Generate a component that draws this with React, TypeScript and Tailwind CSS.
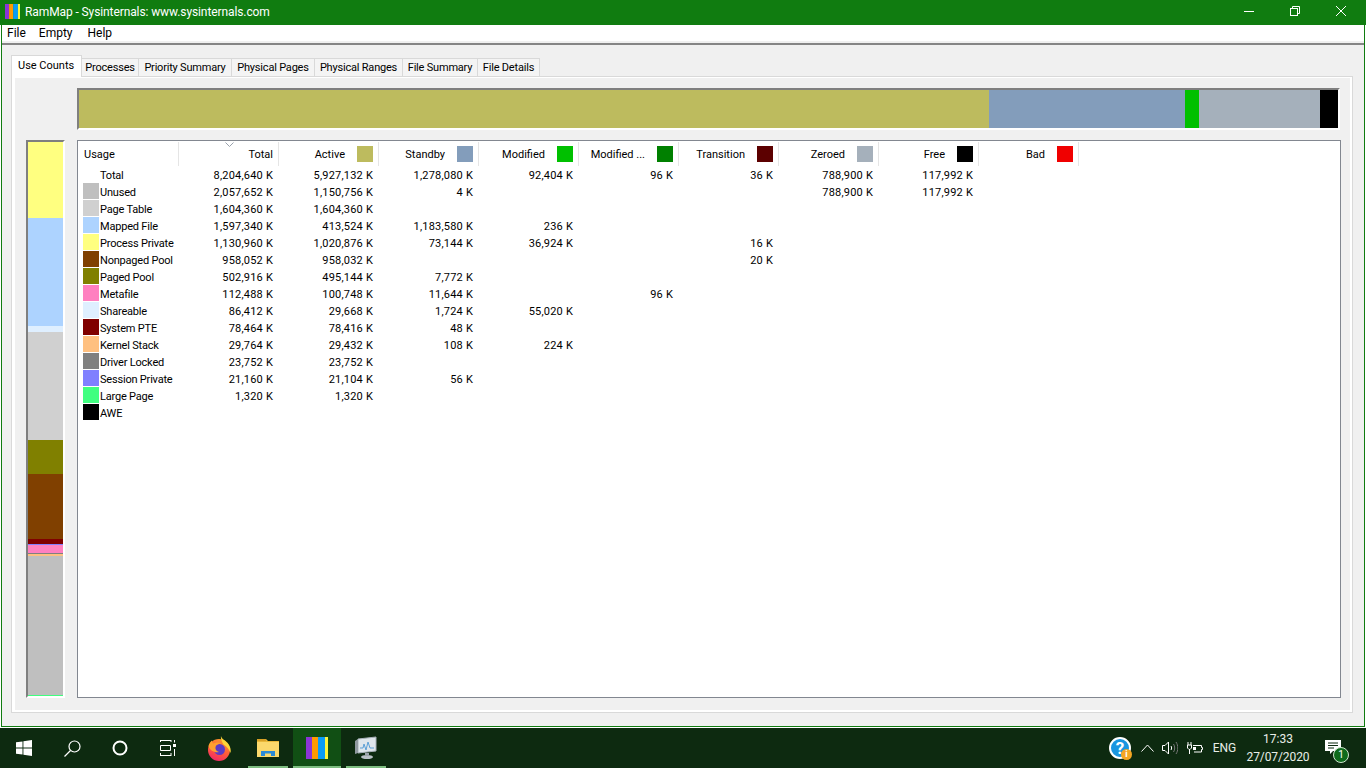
const sans = "font-['Roboto','Noto_Sans',sans-serif]";

const tabs = [
  { label: "Processes", w: "w-[57px]" },
  { label: "Priority Summary", w: "w-[93px]" },
  { label: "Physical Pages", w: "w-[83px]" },
  { label: "Physical Ranges", w: "w-[88px]" },
  { label: "File Summary", w: "w-[75px]" },
  { label: "File Details", w: "w-[62px]" },
];

const columns = [
  { label: "Active", color: "bg-[#bdbb5e]" },
  { label: "Standby", color: "bg-[#839dbb]" },
  { label: "Modified", color: "bg-[#00c000]" },
  { label: "Modified ...", color: "bg-[#008000]" },
  { label: "Transition", color: "bg-[#5c0000]" },
  { label: "Zeroed", color: "bg-[#a5b0bb]" },
  { label: "Free", color: "bg-black" },
  { label: "Bad", color: "bg-[#f00000]" },
];

const rows = [
  { name: "Total", color: "", v: ["8,204,640 K", "5,927,132 K", "1,278,080 K", "92,404 K", "96 K", "36 K", "788,900 K", "117,992 K"] },
  { name: "Unused", color: "bg-[#bfbfbf]", v: ["2,057,652 K", "1,150,756 K", "4 K", "", "", "", "788,900 K", "117,992 K"] },
  { name: "Page Table", color: "bg-[#d0d0d0]", v: ["1,604,360 K", "1,604,360 K"] },
  { name: "Mapped File", color: "bg-[#add3ff]", v: ["1,597,340 K", "413,524 K", "1,183,580 K", "236 K"] },
  { name: "Process Private", color: "bg-[#ffff80]", v: ["1,130,960 K", "1,020,876 K", "73,144 K", "36,924 K", "", "16 K"] },
  { name: "Nonpaged Pool", color: "bg-[#804000]", v: ["958,052 K", "958,032 K", "", "", "", "20 K"] },
  { name: "Paged Pool", color: "bg-[#808000]", v: ["502,916 K", "495,144 K", "7,772 K"] },
  { name: "Metafile", color: "bg-[#ff80c0]", v: ["112,488 K", "100,748 K", "11,644 K", "", "96 K"] },
  { name: "Shareable", color: "bg-[#dfefff]", v: ["86,412 K", "29,668 K", "1,724 K", "55,020 K"] },
  { name: "System PTE", color: "bg-[#800000]", v: ["78,464 K", "78,416 K", "48 K"] },
  { name: "Kernel Stack", color: "bg-[#ffc080]", v: ["29,764 K", "29,432 K", "108 K", "224 K"] },
  { name: "Driver Locked", color: "bg-[#808080]", v: ["23,752 K", "23,752 K"] },
  { name: "Session Private", color: "bg-[#8080ff]", v: ["21,160 K", "21,104 K", "56 K"] },
  { name: "Large Page", color: "bg-[#40ff80]", v: ["1,320 K", "1,320 K"] },
  { name: "AWE", color: "bg-black", v: [] as string[] },
];

const barSegments = [
  { w: "w-[910px]", color: "bg-[#bdbb5e]" },
  { w: "w-[196px]", color: "bg-[#839dbb]" },
  { w: "w-[14px]", color: "bg-[#00c000]" },
  { w: "w-[121px]", color: "bg-[#a5b0bb]" },
  { w: "w-[18px]", color: "bg-black" },
];

const stackSegments = [
  { h: "h-[76px]", color: "bg-[#ffff80]" },
  { h: "h-[108px]", color: "bg-[#add3ff]" },
  { h: "h-[6px]", color: "bg-[#dfefff]" },
  { h: "h-[108px]", color: "bg-[#d0d0d0]" },
  { h: "h-[34px]", color: "bg-[#808000]" },
  { h: "h-[65px]", color: "bg-[#804000]" },
  { h: "h-[5px]", color: "bg-[#800000]" },
  { h: "h-px", color: "bg-[#8080ff]" },
  { h: "h-[8px]", color: "bg-[#ff80c0]" },
  { h: "h-px", color: "bg-[#808080]" },
  { h: "h-[2px]", color: "bg-[#ffc080]" },
  { h: "h-[139px]", color: "bg-[#bfbfbf]" },
  { h: "h-px", color: "bg-[#40ff80]" },
];

function RamMapIcon({ size }: { size: number }) {
  return (
    <svg width={size} height={size} viewBox="0 0 22 22">
      <rect x="0" y="0" width="6" height="22" fill="#8a35d6" />
      <rect x="6" y="0" width="6" height="22" fill="#ff9a00" />
      <rect x="12" y="0" width="7" height="22" fill="#0a9cf5" />
      <rect x="19" y="0" width="3" height="22" fill="#fdf53a" />
    </svg>
  );
}

function Firefox() {
  return (
    <svg width="24" height="25" viewBox="0 0 24 25">
      <defs>
        <linearGradient id="ff" x1="0.7" y1="0" x2="0.3" y2="1">
          <stop offset="0" stopColor="#ff9a2a" />
          <stop offset="0.55" stopColor="#ff5a3a" />
          <stop offset="1" stopColor="#f0266a" />
        </linearGradient>
      </defs>
      <circle cx="12" cy="14" r="11" fill="url(#ff)" />
      <path d="M14 0c.5 3 4.500 4.500 7 7.500 2.200 2.700 3.200 6 2.500 9.500-1.200-3.500-3.500-6.500-7-8.500-1.500-3-3-5.500-2.500-8.500z" fill="#ffd53a" />
      <circle cx="12.500" cy="13.500" r="5.500" fill="#5d3bc4" />
      <path d="M1.500 10C2 7.500 3.500 5.500 5 4.500c0 1.500.5 2.500 1.500 3C9 6 12 6 14.500 7.500c-3 0-5.500 1.500-6 3.500-.5 2.500 1 4.500 3.500 5-4 1-9-1-10.500-6z" fill="#ffa02e" />
    </svg>
  );
}

function Explorer() {
  return (
    <svg width="22" height="20" viewBox="0 0 22 20">
      <path d="M0 1h9l2 2H22v15H0z" fill="#e9b93a" />
      <rect x="0" y="4" width="22" height="15" fill="#fbd96c" />
      <path d="M4 18v-5h14v5h-4v-2.500H8V18z" fill="#2c8bd6" />
      <rect x="0" y="1" width="9" height="2" fill="#d9a126" />
    </svg>
  );
}

function TaskManager() {
  return (
    <svg width="24" height="24" viewBox="0 0 24 24">
      <path d="M4 3l18-2v14L4 17z" fill="#dfe6ec" stroke="#a7b0b8" />
      <path d="M1 5l3-2v14l-3 1z" fill="#8f989f" />
      <path d="M6 12h3l1-4 2 6 2-8 2 6h4" fill="none" stroke="#5b9fd6" strokeWidth="1" />
      <ellipse cx="13" cy="21" rx="6" ry="2" fill="#b9c0c6" />
      <rect x="11" y="17" width="4" height="3" fill="#9aa3aa" />
    </svg>
  );
}

function TaskButton({ children, active }: { children: React.ReactNode; active?: boolean }) {
  return (
    <div className={`relative w-[48px] h-[40px] flex items-center justify-center ${active ? "bg-[#114f14]" : ""}`}>
      {children}
      <span className={`absolute bottom-0 h-[2px] bg-[#7dbd80] ${active ? "left-0 right-0" : "left-[4px] right-[4px]"}`} />
    </div>
  );
}

export default function App() {
  return (
    <div className={`w-[1366px] h-[768px] overflow-hidden flex flex-col bg-white text-[11px] leading-[17px] text-black ${sans}`}>
      {/* title bar */}
      <div className="h-[25px] bg-[#107c10] flex items-center text-white">
        <div className="ml-[5px] mb-[3px] flex">
          <RamMapIcon size={15} />
        </div>
        <span className="ml-[5px] mb-[1px] text-[12px] tracking-[-0.1px]">RamMap - Sysinternals: www.sysinternals.com</span>
        <div className="ml-auto mr-[2px] mb-[3px] flex">
          <div className="w-[46px] flex justify-center">
            <svg width="10" height="10" viewBox="0 0 10 10"><path d="M0 5.500h10" stroke="#fff" /></svg>
          </div>
          <div className="w-[46px] flex justify-center">
            <svg width="10" height="10" viewBox="0 0 10 10" fill="none" stroke="#fff"><rect x="0.500" y="2.500" width="7" height="7" /><path d="M2.500 2.500v-2h7v7h-2" /></svg>
          </div>
          <div className="w-[46px] flex justify-center">
            <svg width="10" height="10" viewBox="0 0 10 10"><path d="M0 0l10 10M10 0L0 10" stroke="#fff" /></svg>
          </div>
        </div>
      </div>

      {/* window body */}
      <div className="flex-1 flex flex-col pl-px pr-px pb-px">
        <div className="flex-1 flex flex-col border-x border-b border-[#107c10] bg-[#f0f0f0]">
          <div className="h-[16px] bg-white flex items-center text-[12px]">
            <span className="ml-[5px]">File</span>
            <span className="ml-[13px]">Empty</span>
            <span className="ml-[15px]">Help</span>
          </div>
          <div className="h-[2px]" />
          <div className="h-[2px] bg-[#858585]" />

          {/* tab strip */}
          <div className="relative z-10 ml-[9px] mt-[10px] h-[22px] -mb-px flex items-end">
            <div className="h-[22px] w-[71px] pb-[3px] bg-white border border-b-0 border-[#d9d9d9] flex items-center pl-[6px]">Use Counts</div>
            {tabs.map((t) => (
              <div key={t.label} className={`${t.w} h-[18px] mb-px border-t border-r border-[#d9d9d9] bg-[#f4f4f4] flex items-center justify-center whitespace-nowrap tracking-[-0.2px]`}>
                {t.label}
              </div>
            ))}
          </div>

          {/* tab panel */}
          <div className="ml-[9px] w-[1342px] h-[637px] border border-[#d9d9d9]">
            <div className="h-full border-l-[3px] border-r-2 border-t border-b-2 border-white pl-[11px] pt-[10px]">
              <div className="ml-[51px] w-[1263px] h-[42px] flex border-t-2 border-l-2 border-t-[#7f7f7f] border-l-[#7f7f7f] border-b-2 border-r-2 border-b-white border-r-white">
                {barSegments.map((s) => (
                  <div key={s.color} className={`${s.w} h-full ${s.color}`} />
                ))}
              </div>

              <div className="mt-[10px] flex gap-[12px]">
                <div className="w-[39px] h-[558px] flex flex-col border-t-2 border-l-2 border-t-[#7f7f7f] border-l-[#7f7f7f] border-b-2 border-r-2 border-b-white border-r-white">
                  {stackSegments.map((s, i) => (
                    <div key={i} className={`${s.h} ${s.color}`} />
                  ))}
                </div>

                {/* use counts list */}
                <div className="w-[1264px] h-[558px] border border-[#828790] bg-white">
                  <div className="h-[25px] pt-px flex">
                    <div className="w-[101px] h-[24px] border-r border-[#e5e5e5] flex items-center pl-[6px]">Usage</div>
                    <div className="relative w-[100px] h-[24px] border-r border-[#e5e5e5] flex items-center justify-end pr-[5px]">
                      <svg className="absolute top-0 left-[46px]" width="9" height="5" viewBox="0 0 9 5"><path d="M0.500 0.500l4 4 4-4" fill="none" stroke="#9aa2ad" /></svg>
                      Total
                    </div>
                    {columns.map((c) => (
                      <div key={c.label} className="w-[100px] h-[24px] border-r border-[#e5e5e5] flex items-center justify-end pr-[5px] whitespace-nowrap">
                        {c.label}
                        <span className={`ml-[12px] w-[16px] h-[16px] ${c.color}`} />
                      </div>
                    ))}
                  </div>
                  {rows.map((r) => (
                    <div key={r.name} className="h-[17px] flex">
                      <div className="w-[101px] flex pl-[5px] whitespace-nowrap">
                        <span className={`w-[16px] h-[16px] shrink-0 ${r.color}`} />
                        <span className="ml-[1px] pt-px tracking-[-0.2px]">{r.name}</span>
                      </div>
                      {r.v.map((val, i) => (
                        <div key={i} className="w-[100px] pr-[6px] pt-px text-right tracking-[0.2px] whitespace-nowrap">{val}</div>
                      ))}
                    </div>
                  ))}
                </div>
              </div>
            </div>
          </div>
        </div>
      </div>

      {/* taskbar */}
      <div className="h-[40px] bg-[#0d2a10] flex items-center text-white">
        <div className="w-[48px] h-[40px] flex items-center justify-center">
          <svg width="16" height="16" viewBox="0 0 16 16" fill="#fff">
            <path d="M0 2.300l6.500-.9v6.200H0zM7.400 1.300L16 0v7.600H7.400zM0 8.400h6.500v6.200L0 13.700zM7.400 8.400H16V16l-8.600-1.200z" />
          </svg>
        </div>
        <div className="w-[48px] h-[40px] flex items-center justify-center">
          <svg width="17" height="17" viewBox="0 0 17 17" fill="none" stroke="#fff" strokeWidth="1.200">
            <circle cx="10.500" cy="6.500" r="5.500" />
            <path d="M6.500 10.500L0.500 16.500" />
          </svg>
        </div>
        <div className="w-[48px] h-[40px] flex items-center justify-center">
          <svg width="16" height="16" viewBox="0 0 16 16" fill="none" stroke="#fff" strokeWidth="2">
            <circle cx="8" cy="8" r="6.500" />
          </svg>
        </div>
        <div className="w-[48px] h-[40px] flex items-center justify-center">
          <svg width="16" height="16" viewBox="0 0 16 16" fill="none" stroke="#fff">
            <path d="M0 .500h11M0 15.500h11M.500 5.500h10v5H.500z" />
            <rect x="13" y="4" width="3" height="3" fill="#fff" stroke="none" />
            <path d="M14.500 0v2.500M14.500 9v7M11 0v2M.500 0v2M11 13v3M.500 13v3" />
          </svg>
        </div>
        <div className="w-[3px]" />
        <div className="flex gap-px">
          <div className="w-[48px] h-[40px] flex items-center justify-center"><Firefox /></div>
          <TaskButton><Explorer /></TaskButton>
          <TaskButton active><RamMapIcon size={22} /></TaskButton>
          <TaskButton><TaskManager /></TaskButton>
        </div>

        {/* system tray */}
        <div className="ml-auto flex items-center h-[40px] text-[#e8eee8]">
          <div className="w-[28px] flex justify-center pl-[2px]">
            <div className="relative w-[22px] h-[22px] rounded-full bg-[#1a96e0] border-2 border-white flex items-center justify-center text-white text-[17px] font-bold leading-none">
              ?
              <span className="absolute -right-[3px] -bottom-[3px] w-[11px] h-[11px] rounded-full bg-[#f5a623] text-[9px] leading-[11px] text-center">i</span>
            </div>
          </div>
          <div className="w-[28px] flex justify-center">
            <svg width="13" height="8" viewBox="0 0 13 8" fill="none" stroke="#fff"><path d="M.5 7.500l6-6.500 6 6.500" /></svg>
          </div>
          <div className="w-[18px] flex justify-center">
            <svg width="16" height="14" viewBox="0 0 16 14" fill="none" stroke="#fff">
              <path d="M.5 4.500h2.500l3.500-3.500v12l-3.500-3.500H.5z" />
              <path d="M9 5c.8 1.200.8 2.800 0 4" />
              <path d="M11.500 3c1.600 2.400 1.600 5.600 0 8M14 1c2.400 3.600 2.400 8.400 0 12" stroke="#777" />
            </svg>
          </div>
          <div className="w-[32px] flex justify-center">
            <svg width="16" height="12" viewBox="0 0 16 12" fill="none" stroke="#fff">
              <path d="M6 3.500h8.500v2h1v2h-1v2.500H7" />
              <path d="M1 0v3M4 0v3M.5 3h4v3l-1.500 1.500h-1L.500 6zM2.500 7.500V12" />
              <rect x="6" y="5" width="3" height="3" fill="#fff" stroke="none" />
            </svg>
          </div>
          <div className="w-[27px] text-center text-[12px]">ENG</div>
          <div className="w-[80px] flex flex-col items-center text-[12px] leading-[18px]">
            <span>17:33</span>
            <span className="tracking-[-0.1px]">27/07/2020</span>
          </div>
          <div className="w-[30px] flex justify-center">
            <div className="relative w-[16px] h-[16px]">
              <svg width="16" height="15" viewBox="0 0 16 15">
                <path d="M0 0h16v11H8l-3 3v-3H0z" fill="#fff" />
                <path d="M3 3h10M3 5.500h10M3 8h6" stroke="#0d2a10" />
              </svg>
              <span className="absolute -right-[8px] top-[7px] w-[16px] h-[16px] rounded-full bg-[#0f6b1c] border border-[#cfe6cf] text-[10px] leading-[14px] text-center text-white">1</span>
            </div>
          </div>
          <div className="w-[18px]" />
        </div>
      </div>
    </div>
  );
}
